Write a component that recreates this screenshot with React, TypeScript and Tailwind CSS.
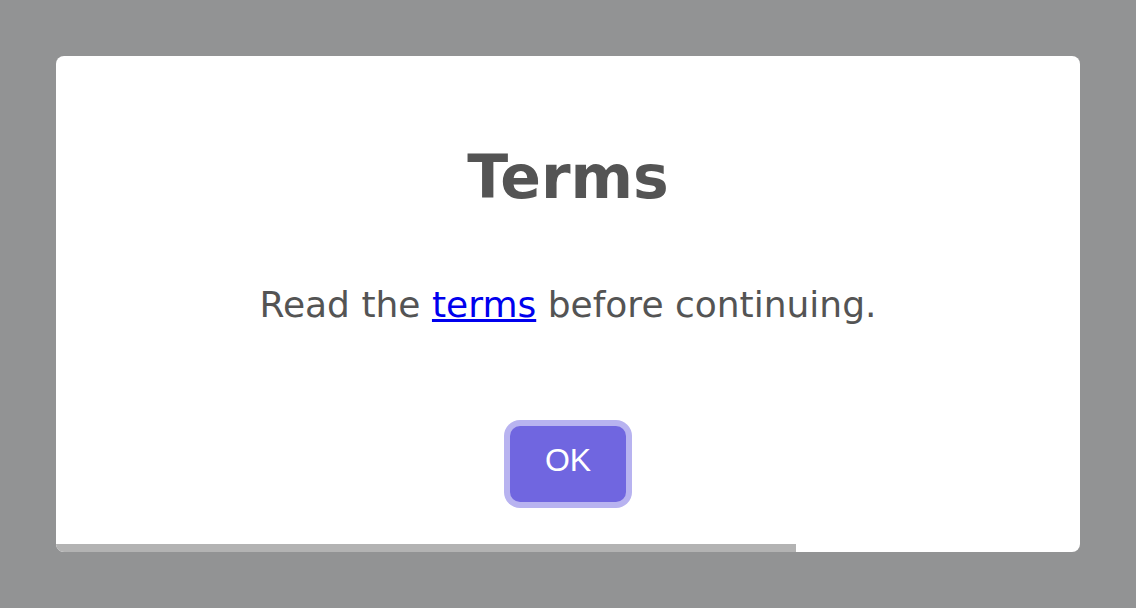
// Terms modal with timer progress bar

export default function App() {
  return (
    <div
      className="min-h-screen w-full flex items-center justify-center bg-[#929394]"
      style={{ fontFamily: '"DejaVu Sans", "Liberation Sans", sans-serif' }}
    >
      <div className="w-[1024px] h-[496px] bg-white rounded-[8px] overflow-hidden flex flex-col items-center pt-[86px]">
        {/* Title */}
        <h2 className="h-[70px] text-[60px] leading-[70px] font-bold text-[#545454]">
          Terms
        </h2>

        {/* Body */}
        <p className="mt-[72px] h-[42px] text-[36px] leading-[42px] text-[#545454]">
          Read the{' '}
          <a href="#" className="text-[#0000ee] underline">
            terms
          </a>{' '}
          before continuing.
        </p>

        {/* Confirm */}
        <button
          className="mt-[100px] h-[76px] w-[116px] pb-2 rounded-[10px] bg-[#7066e0] text-white text-[32px] leading-[36px] ring-[6px] ring-[#b8b3f0]"
          style={{ fontFamily: '"Liberation Sans", Arial, sans-serif' }}
        >
          OK
        </button>

        {/* Timer bar */}
        <div className="mt-[42px] h-2 w-full">
          <div className="h-2 w-[740px] bg-[#b3b3b3]" />
        </div>
      </div>
    </div>
  );
}
